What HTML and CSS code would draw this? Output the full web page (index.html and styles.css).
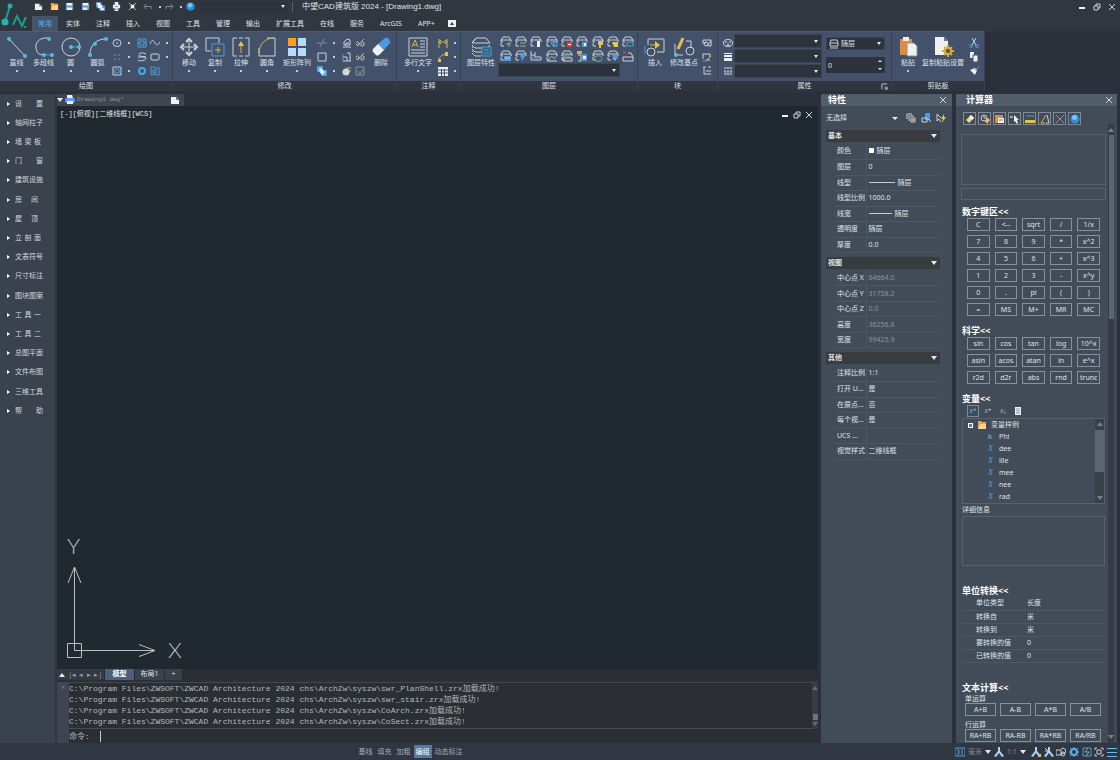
FILE: index.html
```
<!DOCTYPE html>
<html lang="zh-CN">

<head>
    <meta charset="UTF-8">
    <meta name="viewport" content="width=device-width, initial-scale=1.0">
    <title>中望CAD建筑版 2024 - [Drawing1.dwg]</title>
    <link rel="stylesheet" href="styles.css">
</head>

<body>
    <!-- icon sprite -->
    <svg class="sprite" aria-hidden="true">
        <symbol id="new" viewBox="0 0 10 10"><path class="fw" d="M1 2h5l3 3v4H1z"/><path class="fd" d="M6 2v3h3z"/></symbol>
        <symbol id="folder" viewBox="0 0 10 10"><path class="fo" d="M1 1h3l1 1h4v7H1z"/><path d="M3 4h6v5H1z" fill="#ffd08a"/></symbol>
        <symbol id="save" viewBox="0 0 10 10"><path class="fb" d="M1 1h8v8H1z"/><path class="fw" d="M2 1h6v3H2zM2 6h6v3H2z"/></symbol>
        <symbol id="saveas" viewBox="0 0 10 10"><path class="fb" d="M1 1h8v8H1z"/><path class="fw" d="M2 1h6v3H2zM2 6h5v3H2z"/><path class="y" d="M9 4L6 9"/></symbol>
        <symbol id="copies" viewBox="0 0 10 10"><path class="fb" d="M0 0h6v6H0zM4 4h6v6H4z"/><path class="fw" d="M1 1h4v2H1zM2 3h5v4H2zM5 7h4v2H5z"/></symbol>
        <symbol id="print" viewBox="0 0 10 10"><path class="fw" d="M3 0h4v3H3zM1 3h8v4H1zM3 7h4v3H3z"/><path class="b" d="M3 5h4M3 8h4"/></symbol>
        <symbol id="printblue" viewBox="0 0 10 10"><path class="fw" d="M2 0h5l1 3H2z"/><rect x="0" y="3" width="10" height="5" rx="2" fill="#5b9cf0"/><path class="fw" d="M2 6h6v3H2z"/></symbol>
        <symbol id="zoomall" viewBox="0 0 10 10"><path class="w" d="M1 1l2 2M9 1L7 3M1 9l2-2M9 9L7 7"/><path class="fw" d="M3 3h4v4H3z"/></symbol>
        <symbol id="undo" viewBox="0 0 10 10"><path class="g" d="M9 8V5H2M4 2L1 5l3 3"/></symbol>
        <symbol id="redo" viewBox="0 0 10 10"><path class="g" d="M1 8V5h7M6 2l3 3-3 3"/></symbol>
        <symbol id="help" viewBox="0 0 10 10"><circle cx="5" cy="5" r="4.500" fill="#2b8fdc"/><circle cx="4.500" cy="3.500" r="2.500" fill="#79c5f7"/></symbol>

        <symbol id="line" viewBox="0 0 22 22"><path class="w" d="M3 3l16 17"/><circle class="fc" cx="3" cy="3" r="2"/><circle class="fc" cx="19" cy="20" r="2"/></symbol>
        <symbol id="pline" viewBox="0 0 22 22"><path class="w" d="M16 2C7 1 2 6 3 12s4 7 8 7"/><path class="b" d="M11 19h8"/><circle class="fc" cx="16" cy="3" r="2"/><circle class="fc" cx="11" cy="19" r="2"/><circle class="fc" cx="19" cy="19" r="2"/></symbol>
        <symbol id="circle" viewBox="0 0 22 22"><circle class="w" cx="11" cy="11" r="9"/><path class="b" d="M11 11h9"/><circle class="fc" cx="11" cy="11" r="2"/><circle class="fc" cx="19" cy="11" r="2"/></symbol>
        <symbol id="arc" viewBox="0 0 22 22"><path class="w" d="M3 19C3 9 9 3 19 3"/><circle class="fc" cx="3" cy="19" r="2"/><circle class="fc" cx="8" cy="8" r="2"/><circle class="fc" cx="19" cy="3" r="2"/></symbol>
        <symbol id="move" viewBox="0 0 22 22"><path class="w" d="M11 5v12M5 11h12"/><path class="w" d="M8 6l3-3 3 3M8 16l3 3 3-3M6 8l-3 3 3 3M16 8l3 3-3 3" stroke-width="2"/></symbol>
        <symbol id="copy" viewBox="0 0 22 22"><path class="w" d="M7 15H2V2h13v5"/><path class="b" d="M8 8h12v12H8z"/><path class="y" d="M14 11v6M11 14h6"/></symbol>
        <symbol id="stretch" viewBox="0 0 22 22"><path class="w" d="M7 2H3v18h4M15 2h4v18h-4M9 2h4M9 20h4"/><path class="y" d="M11 17V8"/><path class="fy" d="M11 5l3 5H8z"/></symbol>
        <symbol id="fillet" viewBox="0 0 22 22"><path class="w" d="M11 2h8v18H3v-8"/><path class="y" d="M3 18C3 8 9 2 18 2"/></symbol>
        <symbol id="array" viewBox="0 0 22 22"><path fill="#f6a21c" d="M2 2h8v8H2z"/><path fill="#b5dcfb" d="M12 2h8v8h-8zM2 12h8v8H2zM12 12h8v8h-8z"/></symbol>
        <symbol id="erase" viewBox="0 0 22 22"><path class="fb" d="M8 8l7-6q2-1 3 0l2 3q1 1 0 2l-6 7z"/><path class="fw" d="M8 8l6 6-5 5q-2 1-3 0l-3-3q-1-2 0-3z"/></symbol>
        <symbol id="mtext" viewBox="0 0 22 22"><path class="w" d="M2 2h18v18H2zM4 14h14M4 17h14M13 5h5M13 8h5M13 11h5"/><path class="y" d="M5 11l3-7 3 7M6 9h4"/></symbol>
        <symbol id="layers" viewBox="0 0 22 22"><path class="w" d="M6 2h10l4 5H2zM2 9l3 3h12l3-3M2 13l3 3h7M2 17l3 3h6M6 2L2 7M2 12l2-2M2 16l2-2"/><path fill="#35617d" stroke="#4a9fd8" d="M12 11h9v9h-9z"/><path class="b" d="M14 14h5M14 17h5"/></symbol>
        <symbol id="insert" viewBox="0 0 22 22"><path class="w" d="M4 9V3h16v13h-7"/><circle class="w" cx="7" cy="16" r="4"/><path class="b" d="M1 10v8"/><path class="y" d="M6 9h6"/><path class="fy" d="M11 5l5 4-5 4z"/></symbol>
        <symbol id="basept" viewBox="0 0 22 22"><path class="w" d="M2 8v11h8M13 5h5v7"/><path stroke="#e9bd45" stroke-width="3" d="M10 2L5 13"/><circle class="w" cx="17" cy="15" r="4"/><circle class="fc" cx="3" cy="19" r="2"/></symbol>
        <symbol id="paste" viewBox="0 0 22 22"><path fill="#e58a3b" d="M3 3h12v16H3z"/><path class="fw" d="M6 1h6v4H6z"/><path fill="#eef1f4" stroke="#8b949f" d="M10 7h7l3 3v10H10z"/></symbol>
        <symbol id="pasteset" viewBox="0 0 22 22"><path class="fw" d="M3 1h9l4 4v14H3z"/><path class="fd" d="M12 1v4h4z"/><path d="M16 9v12M10 15h12M12 11l8 8M20 11l-8 8" stroke="#dba82f" stroke-width="2"/><circle cx="16" cy="15" r="4" fill="#dba82f"/><circle cx="16" cy="15" r="2" fill="#43526a"/></symbol>

        <symbol id="s-ellipse" viewBox="0 0 10 10"><ellipse class="w" cx="5" cy="5" rx="4" ry="3.500"/><circle class="fc" cx="5" cy="5" r="1"/></symbol>
        <symbol id="s-hatch" viewBox="0 0 10 10"><path class="b" d="M1 1h8v8H1zM3 3h4v4H3z"/><path class="b" d="M1 5h2M7 5h2"/></symbol>
        <symbol id="s-spline" viewBox="0 0 10 10"><path class="w" d="M0 6c2-5 3-4 5-1s3 2 5-1"/></symbol>
        <symbol id="s-point" viewBox="0 0 10 10"><path class="b" d="M2 2l2 2M8 2L6 4M2 8l2-2M8 8L6 6"/></symbol>
        <symbol id="s-helix" viewBox="0 0 10 10"><path class="w" d="M9 2C5 0 1 1 2 3s7 1 7 3-5 4-8 2M1 5h8"/></symbol>
        <symbol id="s-rect" viewBox="0 0 10 10"><rect class="w" x="1" y="2" width="8" height="6" rx="1"/></symbol>
        <symbol id="s-region" viewBox="0 0 10 10"><path class="w" d="M1 1h8v8H1z"/><path class="b" d="M3 3h4v4H3z"/></symbol>
        <symbol id="s-donut" viewBox="0 0 10 10"><circle cx="5" cy="5" r="3" fill="none" stroke="#45a8e8" stroke-width="2"/></symbol>
        <symbol id="s-wipe" viewBox="0 0 10 10"><path class="b" d="M1 1h4l1 2 3-2v8H6L5 8 1 9zM3 4h3v3H3z"/></symbol>
        <symbol id="s-trim" viewBox="0 0 10 10"><path class="g" d="M0 5h4M6 5h4M7 1L3 9"/></symbol>
        <symbol id="s-square" viewBox="0 0 10 10"><path class="w" d="M1 1h8v8H1z"/><path class="b" d="M1 7v2h2"/></symbol>
        <symbol id="s-bool" viewBox="0 0 10 10"><rect x="0" y="0" width="6" height="6" rx="1" fill="#4aa8ec"/><rect x="4" y="4" width="6" height="6" rx="1" fill="#4aa8ec"/><path fill="#d5ecfc" d="M2 3l2-1 4 4-2 3-3-2z"/></symbol>
        <symbol id="s-offset" viewBox="0 0 10 10"><path class="w" d="M1 9h8M2 7V4l3-3 3 1v5z"/><path class="w" d="M4 7V5h3"/></symbol>
        <symbol id="s-align" viewBox="0 0 10 10"><path class="w" d="M1 9h8M5 1h3v8M1 5h4v4"/><path class="b" d="M1 2v7"/></symbol>
        <symbol id="s-ball" viewBox="0 0 10 10"><circle cx="4" cy="6" r="3.500" fill="#d5d9de"/><path class="y" d="M4 2h5M8 4v2"/></symbol>
        <symbol id="s-break" viewBox="0 0 10 10"><path class="y" d="M9 1L2 8"/><path class="w" d="M1 5c1-2 3-1 3 1S2 8 1 6M7 4c2-1 3 3 1 4S5 6 7 5"/></symbol>
        <symbol id="s-edit" viewBox="0 0 10 10"><path class="g" d="M1 1h8v8H1zM3 5l2 3 3-5"/></symbol>
        <symbol id="s-dim" viewBox="0 0 10 10"><path class="y" d="M1 1v9M9 1v9M1 4h8M3 2L1 4l2 2M7 2l2 2-2 2"/></symbol>
        <symbol id="s-leader" viewBox="0 0 10 10"><path class="y" d="M1 9c0-4 2-6 7-7"/><path class="fy" d="M7 0h3v4H7zM0 7h3v3H0z"/></symbol>
        <symbol id="s-table" viewBox="0 0 10 10"><path class="fw" d="M0 1h10v9H0z"/><path stroke="#43526a" d="M0 4h10M0 7h10M3.500 3v7M6.500 3v7"/></symbol>
        <symbol id="s-layer" viewBox="0 0 12 12"><path class="w" d="M3 1h6l2 3H1zM1 4v2h2M1 7v3h3M11 4v2"/></symbol>
        <symbol id="s-block" viewBox="0 0 10 10"><path class="w" d="M1 2h8M1 2v3h3M9 2v6H6"/><circle class="w" cx="4" cy="6" r="2"/><path class="w" d="M5 8l4-5"/></symbol>
        <symbol id="s-blockedit" viewBox="0 0 10 10"><path class="w" d="M1 7V2h7v3M4 8h4"/><path class="y" d="M9 4L5 8"/><path class="b" d="M1 9h3"/></symbol>
        <symbol id="s-list" viewBox="0 0 10 10"><path class="y" d="M1 1h3"/><path class="w" d="M2 1v7h7M4 5h5M6 1h3"/></symbol>
        <symbol id="s-palette" viewBox="0 0 10 10"><ellipse class="w" cx="5" cy="5" rx="4.500" ry="3.500"/><circle class="w" cx="3" cy="4" r=".5"/><circle class="w" cx="7" cy="4" r=".5"/><circle class="w" cx="5" cy="7" r="1"/></symbol>
        <symbol id="s-weight" viewBox="0 0 10 10"><path class="fw" d="M1 1h8v1H1zM1 3h8v2H1zM1 6h8v3H1z"/></symbol>
        <symbol id="s-ltype" viewBox="0 0 10 10"><path class="w" d="M1 2h8M1 8h8"/><path class="w" stroke-dasharray="2 1" d="M1 5h8M1 6h8"/></symbol>
        <symbol id="s-cut" viewBox="0 0 10 10"><path class="w" d="M3 0l4 7M7 0L3 7"/><circle class="b" cx="2" cy="8" r="1.500"/><circle class="b" cx="8" cy="8" r="1.500"/></symbol>
        <symbol id="s-docs" viewBox="0 0 10 10"><path class="fw" d="M1 0h4v6H1z"/><path class="fw" stroke="#43526a" d="M4 3h5v7H4z"/></symbol>
        <symbol id="s-brush" viewBox="0 0 10 10"><path class="fw" d="M1 4l5 5 2-5-2-2z"/><path class="b" d="M6 4l4-3"/></symbol>
        <symbol id="s-color" viewBox="0 0 10 10"><path class="w" d="M1 6V1h5M3 8V3h5"/><path class="w" d="M5 5h4v4H5z"/><path d="M6 6h2v2H6z" fill="#d99a5a"/></symbol>
        <symbol id="s-pick" viewBox="0 0 10 10"><path class="fb" d="M4 0h5v7H4z"/><path class="w" d="M1 5h5v4H1zM7 6l3 3"/></symbol>
        <symbol id="s-quick" viewBox="0 0 10 10"><path class="w" d="M1 1v7l2-2 2 3M1 1l4 4"/><path class="fy" d="M8 1L5 6h2L6 10l4-6H8z"/></symbol>
        <symbol id="s-eraser" viewBox="0 0 10 10"><path fill="#e7d78e" d="M1 6l5-5 3 3-5 5z"/><path class="fw" d="M6 1l3 3-2 2-3-3z"/></symbol>
        <symbol id="s-history" viewBox="0 0 10 10"><circle class="w" cx="4" cy="4" r="3"/><path class="w" d="M4 2v2h2"/><path class="fy" d="M5 7l3-3 2 2-3 4z"/></symbol>
        <symbol id="s-clip" viewBox="0 0 10 10"><path fill="#e58a3b" d="M0 1h8v8H0z"/><path class="fw" d="M3 4h6v5H3z"/><path stroke="#c2593c" d="M4 6h4"/></symbol>
        <symbol id="s-cursor" viewBox="0 0 10 10"><path class="w" d="M1 2v2M0 3h3"/><path class="fw" d="M4 1l5 5H7l1 3-1 1-2-3-1 1z"/></symbol>
        <symbol id="s-dist" viewBox="0 0 10 10"><path class="b" d="M1 2h8"/><path class="fy" d="M0 6h10v3H0z"/></symbol>
        <symbol id="s-angle" viewBox="0 0 10 10"><path class="y" d="M6 1L1 9h4"/><path class="w" d="M7 1l2 8H6"/></symbol>
        <symbol id="s-cross" viewBox="0 0 10 10"><path class="g" d="M1 1l8 8M9 1L1 9"/></symbol>
        <symbol id="x" viewBox="0 0 8 8"><path class="w" d="M1 1l6 6M7 1L1 7"/></symbol>
        <symbol id="restore" viewBox="0 0 8 8"><path class="w" d="M1 3h4v4H1zM3 3V1h4v4H5"/></symbol>
        <symbol id="min" viewBox="0 0 8 8"><path class="fw" d="M1 4h6v2H1z"/></symbol>
        <symbol id="person" viewBox="0 0 10 10"><path fill="#a9d4f3" d="M4 0h2v4l4 5-2 1-3-4-3 4-2-1 4-5z"/></symbol>
        <symbol id="gear" viewBox="0 0 10 10"><circle cx="5" cy="5" r="3" fill="none" stroke="#55b2f0" stroke-width="2"/><path class="c" d="M5 0v2M5 8v2M0 5h2M8 5h2M1 1l2 2M7 7l2 2M9 1L7 3M3 7L1 9"/></symbol>
    </svg>

    <div class="app">
        <header class="top">
            <svg class="logo" viewBox="0 0 32 30"><path d="M10 6L5 22M13 25l4-9 5 10 4-9" fill="none" stroke="#1a9c96" stroke-width="2"/><circle cx="10" cy="6" r="2.500" fill="#1fb5ac"/><circle cx="5" cy="22" r="3.500" fill="#1fb5ac"/><circle cx="25" cy="27" r="1" fill="#1fb5ac"/></svg>
            <div class="top-rows">
                <div class="titlebar">
                    <div class="quick">
                        <button aria-label="新建"><svg><use href="#new"/></svg></button>
                        <button aria-label="打开"><svg><use href="#folder"/></svg></button>
                        <button aria-label="保存"><svg><use href="#save"/></svg></button>
                        <button aria-label="另存为"><svg><use href="#saveas"/></svg></button>
                        <button aria-label="全部保存"><svg><use href="#copies"/></svg></button>
                        <button aria-label="打印"><svg><use href="#print"/></svg></button>
                        <button aria-label="预览"><svg><use href="#zoomall"/></svg></button>
                        <button aria-label="放弃"><svg><use href="#undo"/></svg></button>
                        <i class="dot"></i>
                        <button aria-label="重做"><svg><use href="#redo"/></svg></button>
                        <i class="dot"></i>
                        <button aria-label="帮助"><svg><use href="#help"/></svg></button>
                    </div>
                    <span class="pick pick-space"><select aria-label="工作空间"><option></option></select></span>
                    <h1>中望CAD建筑版 2024 - [Drawing1.dwg]</h1>
                    <div class="winbtns">
                        <button aria-label="最小化"><svg><use href="#min"/></svg></button>
                        <button aria-label="还原"><svg><use href="#restore"/></svg></button>
                        <button aria-label="关闭"><svg><use href="#x"/></svg></button>
                    </div>
                </div>
                <nav class="tabs">
                    <a href="#" class="active">常用</a>
                    <a href="#">实体</a>
                    <a href="#">注释</a>
                    <a href="#">插入</a>
                    <a href="#">视图</a>
                    <a href="#">工具</a>
                    <a href="#">管理</a>
                    <a href="#">输出</a>
                    <a href="#">扩展工具</a>
                    <a href="#">在线</a>
                    <a href="#">服务</a>
                    <a href="#">ArcGIS</a>
                    <a href="#">APP+</a>
                    <button class="fold" aria-label="折叠"><svg viewBox="0 0 8 7"><path class="fw" d="M0 0h8v7H0z"/><path d="M4 2l2 3H2z" fill="#31373f"/></svg></button>
                </nav>
            </div>
        </header>

        <div class="ribbon">
            <section class="panel">
                <div class="tools draw">
                    <button class="tool more"><svg><use href="#line"/></svg>直线</button>
                    <button class="tool more"><svg><use href="#pline"/></svg>多段线</button>
                    <button class="tool more"><svg><use href="#circle"/></svg>圆</button>
                    <button class="tool more"><svg><use href="#arc"/></svg>圆弧</button>
                    <div class="minis">
                        <svg><use href="#s-ellipse"/></svg><i class="dot"></i><svg><use href="#s-hatch"/></svg><svg><use href="#s-spline"/></svg><i class="dot"></i>
                        <svg><use href="#s-point"/></svg><i class="dot"></i><svg><use href="#s-helix"/></svg><svg><use href="#s-rect"/></svg><i class="dot"></i>
                        <svg><use href="#s-region"/></svg><i class="dot"></i><svg><use href="#s-donut"/></svg><svg><use href="#s-wipe"/></svg>
                    </div>
                </div>
                <h2>绘图</h2>
            </section>

            <section class="panel">
                <div class="tools modify">
                    <button class="tool more"><svg><use href="#move"/></svg>移动</button>
                    <button class="tool more"><svg><use href="#copy"/></svg>复制</button>
                    <button class="tool more"><svg><use href="#stretch"/></svg>拉伸</button>
                    <button class="tool more"><svg><use href="#fillet"/></svg>圆角</button>
                    <button class="tool wide more"><svg><use href="#array"/></svg>矩形阵列</button>
                    <div class="minis">
                        <svg><use href="#s-trim"/></svg><i class="dot"></i><svg><use href="#s-offset"/></svg><svg><use href="#s-break"/></svg>
                        <svg><use href="#s-square"/></svg><i class="dot"></i><svg><use href="#s-align"/></svg><svg><use href="#s-break"/></svg>
                        <svg><use href="#s-bool"/></svg><i class="dot"></i><svg><use href="#s-ball"/></svg><svg><use href="#s-edit"/></svg>
                    </div>
                    <button class="tool"><svg><use href="#erase"/></svg>删除</button>
                </div>
                <h2>修改</h2>
            </section>

            <section class="panel">
                <div class="tools annotate">
                    <button class="tool wide more"><svg><use href="#mtext"/></svg>多行文字</button>
                    <div class="minis">
                        <svg><use href="#s-dim"/></svg><i class="dot"></i>
                        <svg><use href="#s-leader"/></svg><i class="dot"></i>
                        <svg><use href="#s-table"/></svg><i class="dot"></i>
                    </div>
                </div>
                <h2>注释</h2>
            </section>

            <section class="panel">
                <div class="tools layer">
                    <button class="tool wide"><svg><use href="#layers"/></svg>图层特性</button>
                    <div class="layer-side">
                        <div class="layer-icons">
                            <svg viewBox="0 0 12 12"><use href="#s-layer"/><path class="gn" d="M6 8h5M9 6v5"/></svg>
                            <svg viewBox="0 0 12 12"><use href="#s-layer"/><path class="gn" d="M5 7h6M5 10h6"/></svg>
                            <svg viewBox="0 0 12 12"><use href="#s-layer"/><path class="fw" d="M7 5h3v6H7z"/></svg>
                            <svg viewBox="0 0 12 12"><use href="#s-layer"/><path class="c" d="M5 6h6v4H7zM8 5v6"/></svg>
                            <svg viewBox="0 0 12 12"><use href="#s-layer"/><path fill="#e0403c" d="M6 6h5v5H6z"/><path class="fw" d="M7 8h3v1H7z"/></svg>
                            <svg viewBox="0 0 12 12"><use href="#s-layer"/><path class="fb" d="M6 6h5v5H6z"/><path class="fw" d="M8 7h2v3H8z"/></svg>
                            <svg viewBox="0 0 12 12"><use href="#s-layer"/><path class="fy" d="M6 5h5v4H9v3H7V9H6z"/></svg>
                            <svg viewBox="0 0 12 12"><use href="#s-layer"/><path class="fy" d="M5 6h6v5H7z"/><path class="w" d="M6 7l4 4"/></svg>
                            <svg viewBox="0 0 12 12"><use href="#s-layer"/><path class="b" d="M5 6h6v4H5z"/></svg>
                            <svg viewBox="0 0 12 12"><use href="#s-layer"/><path class="fb" d="M4 6h7v5H4z"/><path class="w" d="M5 8h5"/></svg>
                            <svg viewBox="0 0 12 12"><use href="#s-layer"/><path class="fb" d="M5 5h6L7 11z"/></svg>
                            <svg viewBox="0 0 12 12"><path class="w" d="M1 1v9h10V7H5V2M1 5h4"/><path class="b" d="M2 8h7"/></svg>
                            <svg viewBox="0 0 12 12"><use href="#s-layer"/><path class="gn" d="M3 9l3-3 2 3 3-4"/><path class="w" d="M1 11h10"/></svg>
                            <svg viewBox="0 0 12 12"><use href="#s-layer"/><path class="gn" d="M3 6h7"/><path class="w" d="M2 8h9v3H2z"/></svg>
                            <svg viewBox="0 0 12 12"><path class="fo" d="M1 1h5v3H1z"/><path class="w" d="M2 5h3v6H2"/><path class="fb" d="M6 4h5v7H6z"/><path class="fw" d="M7 6h3v3H7z"/></svg>
                            <svg viewBox="0 0 12 12"><use href="#s-layer"/><path class="gn" d="M3 8c1-3 6-3 7 0M10 9c-1 3-6 3-7 0"/></svg>
                            <svg viewBox="0 0 12 12"><use href="#s-layer"/><path class="fb" d="M5 5h6v3l-4 3z"/><path class="w" d="M6 8l3 2"/></svg>
                            <svg viewBox="0 0 12 12"><path stroke="#e0403c" d="M1 1l3 3M4 1L1 4"/><path class="w" d="M6 3h3l2 4H1v4h10V7"/></svg>
                        </div>
                        <span class="pick pick-layer"><select aria-label="当前图层"><option></option></select></span>
                    </div>
                </div>
                <h2>图层</h2>
            </section>

            <section class="panel">
                <div class="tools block">
                    <button class="tool"><svg><use href="#insert"/></svg>插入</button>
                    <button class="tool mid"><svg><use href="#basept"/></svg>修改基点</button>
                    <div class="minis">
                        <svg><use href="#s-block"/></svg>
                        <svg><use href="#s-blockedit"/></svg>
                        <svg><use href="#s-list"/></svg>
                    </div>
                </div>
                <h2>块</h2>
            </section>

            <section class="panel">
                <div class="tools props">
                    <div class="minis">
                        <svg><use href="#s-palette"/></svg>
                        <svg><use href="#s-weight"/></svg>
                        <svg><use href="#s-ltype"/></svg>
                    </div>
                    <div class="prop-picks">
                        <span class="pick"><select aria-label="颜色"><option></option></select></span>
                        <span class="pick"><select aria-label="线宽"><option></option></select></span>
                        <span class="pick"><select aria-label="线型"><option></option></select></span>
                    </div>
                    <div class="prop-side">
                        <span class="pick pick-style"><svg viewBox="0 0 10 10"><path class="w" d="M2 1h6l1 3H1zM1 4v3h8V4M1 9h8"/></svg><select aria-label="打印样式"><option>随层</option></select></span>
                        <span class="spin"><input type="text" value="0" aria-label="透明度"><i class="up"></i><i class="down"></i></span>
                    </div>
                </div>
                <h2 class="has-launch">属性<svg class="launch" viewBox="0 0 8 8"><path class="w" d="M1 7V1h6M4 4l3 3M7 4v3H4"/></svg></h2>
            </section>

            <section class="panel">
                <div class="tools clip">
                    <button class="tool more"><svg><use href="#paste"/></svg>粘贴</button>
                    <button class="tool xwide"><svg><use href="#pasteset"/></svg>复制粘贴设置</button>
                    <div class="minis">
                        <svg><use href="#s-cut"/></svg>
                        <svg><use href="#s-docs"/></svg>
                        <svg><use href="#s-brush"/></svg>
                    </div>
                </div>
                <h2>剪贴板</h2>
            </section>
        </div>

        <main class="work">
            <ul class="side">
                <li><a href="#"><span>设</span><span>置</span></a></li>
                <li><a href="#"><span>轴网柱子</span></a></li>
                <li><a href="#" class="three"><span>墙</span><span>梁</span><span>板</span></a></li>
                <li><a href="#"><span>门</span><span>窗</span></a></li>
                <li><a href="#"><span>建筑设施</span></a></li>
                <li><a href="#" class="near"><span>房</span><span>间</span></a></li>
                <li><a href="#" class="near"><span>屋</span><span>顶</span></a></li>
                <li><a href="#" class="three"><span>立</span><span>剖</span><span>面</span></a></li>
                <li><a href="#"><span>文表符号</span></a></li>
                <li><a href="#"><span>尺寸标注</span></a></li>
                <li><a href="#"><span>图块图案</span></a></li>
                <li><a href="#" class="three"><span>工</span><span>具</span><span>一</span></a></li>
                <li><a href="#" class="three"><span>工</span><span>具</span><span>二</span></a></li>
                <li><a href="#"><span>总图平面</span></a></li>
                <li><a href="#"><span>文件布图</span></a></li>
                <li><a href="#"><span>三维工具</span></a></li>
                <li><a href="#"><span>帮</span><span>助</span></a></li>
            </ul>

            <div class="doc">
                <div class="doctabs">
                    <i class="caret"></i>
                    <a href="#"><svg><use href="#printblue"/></svg>Drawing1 dwg*</a>
                    <button aria-label="新建图纸"><svg><use href="#new"/></svg></button>
                </div>
                <div class="canvas">
                    <div class="canvas-top">
                        <span>[-][俯视][二维线框][WCS]</span>
                        <div class="mdi">
                            <button aria-label="最小化图纸"><svg><use href="#min"/></svg></button>
                            <button aria-label="还原图纸"><svg><use href="#restore"/></svg></button>
                            <button aria-label="关闭图纸"><svg><use href="#x"/></svg></button>
                        </div>
                    </div>
                    <svg class="ucs" viewBox="0 0 128 128">
                        <path d="M10.500 112.500h14v14h-14zM17.500 119.500V36.500M11 52l6.500-16L24 52M17.500 119.500H98M82 113.500l16 6-16 6"/>
                        <text x="10" y="23">Y</text>
                        <text x="111" y="127">X</text>
                    </svg>
                </div>
                <div class="layouts">
                    <div class="steps"><i class="caret flip"></i><span>|◂</span><span>◂</span><span>▸</span><span>▸|</span></div>
                    <a href="#" class="on">模型</a>
                    <a href="#">布局1</a>
                    <a href="#" class="plus">+</a>
                </div>
                <div class="cmd">
                    <div class="grip">×</div>
                    <div class="log">
                        <p>C:\Program Files\ZWSOFT\ZWCAD Architecture 2024 chs\ArchZw\syszw\swr_PlanShell.zrx加载成功!</p>
                        <p>C:\Program Files\ZWSOFT\ZWCAD Architecture 2024 chs\ArchZw\syszw\swr_stair.zrx加载成功!</p>
                        <p>C:\Program Files\ZWSOFT\ZWCAD Architecture 2024 chs\ArchZw\syszw\CoArch.zrx加载成功!</p>
                        <p>C:\Program Files\ZWSOFT\ZWCAD Architecture 2024 chs\ArchZw\syszw\CoSect.zrx加载成功!</p>
                        <div class="prompt"><label for="cmdline">命令:</label><i></i><input id="cmdline" type="text"></div>
                    </div>
                    <div class="cmdbar"><i class="caret flip"></i><b></b><i class="caret"></i></div>
                </div>
            </div>

            <aside class="dock props-dock">
                <h3>特性<button aria-label="关闭特性"><svg><use href="#x"/></svg></button></h3>
                <div class="props-body">
                    <div class="choose">
                        <span class="pick"><select aria-label="选择对象"><option>无选择</option></select></span>
                        <svg><use href="#s-color"/></svg>
                        <svg><use href="#s-pick"/></svg>
                        <svg><use href="#s-quick"/></svg>
                    </div>
                    <h4>基本<i class="caret"></i></h4>
                    <table>
                        <tr><th>颜色</th><td><i class="swatch"></i>随层</td></tr>
                        <tr><th>图层</th><td>0</td></tr>
                        <tr><th>线型</th><td><i class="rule"></i>随层</td></tr>
                        <tr><th>线型比例</th><td>1000.0</td></tr>
                        <tr><th>线宽</th><td><i class="rule short"></i>随层</td></tr>
                        <tr><th>透明度</th><td>随层</td></tr>
                        <tr><th>厚度</th><td>0.0</td></tr>
                    </table>
                    <h4>视图<i class="caret"></i></h4>
                    <table class="readonly">
                        <tr><th>中心点 X</th><td>64664.0</td></tr>
                        <tr><th>中心点 Y</th><td>31758.2</td></tr>
                        <tr><th>中心点 Z</th><td>0.0</td></tr>
                        <tr><th>高度</th><td>36256.8</td></tr>
                        <tr><th>宽度</th><td>99425.9</td></tr>
                    </table>
                    <h4>其他<i class="caret"></i></h4>
                    <table>
                        <tr><th>注释比例</th><td>1:1</td></tr>
                        <tr><th>打开 U...</th><td>是</td></tr>
                        <tr><th>在原点...</th><td>否</td></tr>
                        <tr><th>每个视...</th><td>是</td></tr>
                        <tr><th>UCS ...</th><td></td></tr>
                        <tr><th>视觉样式</th><td>二维线框</td></tr>
                    </table>
                </div>
            </aside>

            <aside class="dock calc-dock">
                <h3>计算器<button aria-label="关闭计算器"><svg><use href="#x"/></svg></button></h3>
                <div class="calc-wrap">
                    <div class="calc">
                        <div class="calc-tools">
                            <button aria-label="清除"><svg><use href="#s-eraser"/></svg></button>
                            <button aria-label="清除历史"><svg><use href="#s-history"/></svg></button>
                            <button aria-label="粘贴到命令行"><svg><use href="#s-clip"/></svg></button>
                            <button aria-label="获取坐标"><svg><use href="#s-cursor"/></svg></button>
                            <button aria-label="两点距离"><svg><use href="#s-dist"/></svg></button>
                            <button aria-label="两点角度"><svg><use href="#s-angle"/></svg></button>
                            <button aria-label="两线交点"><svg><use href="#s-cross"/></svg></button>
                            <button aria-label="计算器帮助"><svg><use href="#help"/></svg></button>
                        </div>
                        <textarea class="history" aria-label="历史记录" readonly></textarea>
                        <input class="entry" type="text" aria-label="输入">

                        <h4>数字键区&lt;&lt;</h4>
                        <div class="keys">
                            <button>C</button><button>&lt;--</button><button>sqrt</button><button>/</button><button>1/x</button>
                            <button>7</button><button>8</button><button>9</button><button>*</button><button>x^2</button>
                            <button>4</button><button>5</button><button>6</button><button>+</button><button>x^3</button>
                            <button>1</button><button>2</button><button>3</button><button>-</button><button>x^y</button>
                            <button>0</button><button>.</button><button>pi</button><button>(</button><button>)</button>
                            <button>=</button><button>MS</button><button>M+</button><button>MR</button><button>MC</button>
                        </div>

                        <h4>科学&lt;&lt;</h4>
                        <div class="keys">
                            <button>sin</button><button>cos</button><button>tan</button><button>log</button><button>10^x</button>
                            <button>asin</button><button>acos</button><button>atan</button><button>ln</button><button>e^x</button>
                            <button>r2d</button><button>d2r</button><button>abs</button><button>rnd</button><button>trunc</button>
                        </div>

                        <h4>变量&lt;&lt;</h4>
                        <div class="var-tools">
                            <button class="on"><em>x</em>*</button>
                            <button><em>x</em>*</button>
                            <button><em>x</em>ₓ</button>
                            <button aria-label="返回变量"><svg viewBox="0 0 10 10"><path class="fw" d="M2 1h6v8H2z"/><path class="g" d="M3 3h4M3 5h4M3 7h4"/></svg></button>
                        </div>
                        <div class="vars">
                            <ul>
                                <li class="root"><i class="minus"></i><svg><use href="#folder"/></svg>变量样例</li>
                                <li><b>k</b>Phi</li>
                                <li><em>X</em>dee</li>
                                <li><em>X</em>ille</li>
                                <li><em>X</em>mee</li>
                                <li><em>X</em>nee</li>
                                <li><em>X</em>rad</li>
                            </ul>
                            <div class="vbar"><i class="caret flip"></i><b></b><i class="caret"></i></div>
                        </div>
                        <label class="detail-label" for="detail">详细信息</label>
                        <textarea class="detail" id="detail" readonly></textarea>

                        <h4>单位转换&lt;&lt;</h4>
                        <table>
                            <tr><th>单位类型</th><td>长度</td></tr>
                            <tr><th>转换自</th><td>米</td></tr>
                            <tr><th>转换到</th><td>米</td></tr>
                            <tr><th>要转换的值</th><td>0</td></tr>
                            <tr><th>已转换的值</th><td>0</td></tr>
                        </table>

                        <h4>文本计算&lt;&lt;</h4>
                        <h5>单运算</h5>
                        <div class="ops"><button>A+B</button><button>A-B</button><button>A*B</button><button>A/B</button></div>
                        <h5>行运算</h5>
                        <div class="ops"><button>RA+RB</button><button>RA-RB</button><button>RA*RB</button><button>RA/RB</button></div>
                    </div>
                    <div class="calc-bar"><i class="caret flip"></i><b></b><i class="caret"></i></div>
                </div>
            </aside>
        </main>

        <footer class="status">
            <div class="toggles">
                <button>基线</button>
                <button>填充</button>
                <button>加粗</button>
                <button class="on">编组</button>
                <button>动态标注</button>
            </div>
            <div class="status-right">
                <svg viewBox="0 0 10 10"><path class="b" d="M0 1h10v8H0zM2 3h2v4H2M6 3h2M6 5h2M6 7h2"/></svg>
                <span class="dim">毫米</span><i class="caret"></i>
                <svg><use href="#person"/></svg>
                <span class="dim">1:1</span><i class="caret"></i>
                <div class="status-icons">
                    <svg viewBox="0 0 10 10"><use href="#person"/><path class="fy" d="M7 7h3v3H7z"/></svg>
                    <svg viewBox="0 0 10 10"><use href="#person"/><path class="w" d="M1 1l3 3M1 4h3"/></svg>
                    <svg viewBox="0 0 10 10"><path class="w" d="M0 3h5v5H0zM5 2l2-1 3 2-1 3-3 1"/><circle class="w" cx="7" cy="7" r="2"/></svg>
                    <svg><use href="#gear"/></svg>
                    <svg viewBox="0 0 10 10"><path class="b" d="M1 1h8v8H1z"/><path class="gn" d="M6 1L3 5h4L4 9"/></svg>
                    <svg viewBox="0 0 10 10"><path class="w" d="M1 3V1h2M7 1h2v2M9 7v2H7M3 9H1V7M3 3h4v4H3z"/></svg>
                    <svg viewBox="0 0 10 10"><path fill="#6dbdf2" d="M0 1h10v1H0zM0 5h10v1H0zM0 9h10v1H0z"/></svg>
                </div>
            </div>
        </footer>
    </div>
</body>

</html>
```
FILE: styles.css
```
* {
    margin: 0;
    padding: 0;
    box-sizing: border-box;
}
body {
    background-color: #2b303a;
    color: #dfe3e8;
    font-family: "Noto Sans", "Noto Sans CJK SC", sans-serif;
    font-size: 7px;
    line-height: 10px;
    overflow: hidden;
}
button, select, input, textarea {
    font: inherit;
    color: inherit;
    background: none;
    border: none;
    outline: none;
    border-radius: 0;
}
textarea {
    display: block;
    resize: none;
}
a {
    color: inherit;
    text-decoration: none;
}
ul {
    list-style: none;
}
svg {
    display: block;
    flex: none;
    width: 10px;
    height: 10px;
}
.sprite {
    position: absolute;
    width: 0;
    height: 0;
}

/* icon colours */
.w, .b, .y, .g, .c, .gn { fill: none; }
.w { stroke: #cbd2da; }
.b { stroke: #4a9fd8; }
.c { stroke: #55b2f0; }
.y { stroke: #d9b64a; }
.g { stroke: #8b949f; }
.gn { stroke: #7cc08e; }
.fw { fill: #eef1f4; }
.fb { fill: #4c9be0; }
.fc { fill: #4cc0e0; }
.fy { fill: #e9c04c; }
.fo { fill: #e9a44e; }
.fd { fill: #6a727d; }

.dot {
    width: 2px;
    height: 2px;
    background-color: #c5ccd5;
    align-self: center;
    justify-self: center;
}
.caret {
    flex: none;
    width: 0;
    height: 0;
    border: 3px solid transparent;
    border-top: 4px solid #e8ebee;
    border-bottom: 0;
}
.flip {
    transform: rotate(180deg);
}
.pick {
    position: relative;
    display: flex;
    align-items: center;
    background-color: #2d333c;
    border: 1px solid #3a4350;
}
.pick select {
    appearance: none;
    flex: 1;
    min-width: 0;
    height: 100%;
}
.pick::after {
    content: "";
    position: absolute;
    right: 3px;
    border: 2px solid transparent;
    border-top: 3px solid #e8ebee;
    border-bottom: 0;
}

.app {
    display: flex;
    flex-direction: column;
    height: 100vh;
}

/* title and tabs */
.top {
    display: flex;
    height: 31px;
    background-color: #31373f;
}
.logo {
    width: 32px;
    height: 30px;
}
.top-rows {
    flex: 1;
    display: flex;
    flex-direction: column;
    justify-content: space-between;
}
.titlebar {
    display: flex;
    align-items: center;
    height: 13px;
}
.quick {
    display: flex;
    align-items: center;
    width: 168px;
}
.quick button {
    width: 15px;
    padding-left: 2px;
    margin-right: 1px;
}
.quick .dot {
    margin: 0 2px;
}
.quick svg {
    width: 9px;
    height: 9px;
}
.pick-space {
    width: 88px;
    height: 12px;
    border: none;
}
.titlebar h1 {
    flex: 1;
    margin-left: 4px;
    padding-left: 9px;
    border-left: 1px solid #59616c;
    font-family: "Liberation Sans", "Noto Sans CJK SC", sans-serif;
    font-size: 8px;
    font-weight: normal;
}
.winbtns {
    display: flex;
    gap: 7px;
    padding-right: 4px;
}
.winbtns svg {
    width: 8px;
    height: 8px;
}
.tabs {
    display: flex;
    align-items: flex-end;
}
.tabs a {
    padding: 1px 8px 0;
    line-height: 14px;
}
.tabs .active {
    padding: 1px 6px 0;
    color: #50b4ec;
    background-color: #44546b;
}
.fold {
    margin: 0 0 4px 5px;
}
.fold svg {
    width: 8px;
    height: 7px;
}

/* ribbon */
.ribbon {
    display: flex;
    height: 60px;
}
.panel {
    display: flex;
    flex-direction: column;
    border-right: 1px solid #394250;
    border-top: 1px solid #4d5d75;
    background-color: #43526a;
}
.panel h2 {
    height: 10px;
    background-color: #30363f;
    font-size: 7px;
    font-weight: normal;
    text-align: center;
}
.has-launch {
    display: flex;
    justify-content: center;
}
.launch {
    position: absolute;
    width: 7px;
    height: 7px;
    margin: 2px 0 0 160px;
}
.tools {
    flex: 1;
    display: flex;
    align-items: flex-start;
}
.tool {
    display: flex;
    flex-direction: column;
    align-items: center;
    width: 26px;
    padding-top: 4px;
    line-height: 9px;
    white-space: nowrap;
}
.tool svg {
    width: 22px;
    height: 22px;
}
.tool.mid { width: 32px; }
.tool.wide { width: 34px; }
.tool.xwide { width: 44px; }
.more::after {
    content: "";
    width: 2px;
    height: 2px;
    margin-top: 3px;
    background-color: #c5ccd5;
}
.minis {
    display: grid;
    grid-template-columns: 12px;
    grid-auto-rows: 14px;
    align-items: center;
    justify-items: center;
    padding-top: 4px;
}
.draw { padding-left: 3px; }
.draw .tool { width: 27px; }
.draw .minis { grid-template-columns: 12px 11px 15px 12px 11px; }
.modify { padding: 0 2px 0 3px; }
.modify .minis {
    grid-template-columns: 12px 11px 15px 12px;
    margin: 0 2px;
}
.annotate { padding-left: 4px; }
.annotate .minis {
    grid-template-columns: 12px 11px;
    margin-left: 2px;
}
.layer { padding: 0 1px 0 3px; }
.layer-icons {
    display: grid;
    grid-template-columns: repeat(9, 1fr);
    grid-auto-rows: 14px;
    align-items: center;
    justify-items: center;
    width: 138px;
    padding-top: 3px;
}
.layer-icons svg {
    width: 12px;
    height: 12px;
}
.pick-layer {
    width: 122px;
    height: 14px;
}
.block { padding: 0 4px; }
.block .minis { margin-left: 1px; }
.props { padding: 0 6px 0 4px; }
.prop-picks {
    display: grid;
    gap: 1px;
    width: 88px;
    padding-top: 2px;
}
.prop-picks .pick {
    height: 14px;
}
.prop-side {
    display: grid;
    gap: 7px;
    width: 59px;
    margin-left: 4px;
    padding-top: 5px;
}
.pick-style {
    height: 13px;
    padding-left: 2px;
}
.pick-style select {
    padding-left: 2px;
}
.spin {
    position: relative;
    height: 16px;
    background-color: #2d333c;
}
.spin input {
    width: 48px;
    height: 16px;
    padding-left: 2px;
}
.spin i {
    position: absolute;
    right: 3px;
    border: 2px solid transparent;
}
.spin .up { top: 1px; border-bottom-color: #e8ebee; }
.spin .down { bottom: 1px; border-top-color: #e8ebee; }
.clip { padding: 0 4px 0 3px; }
.clip .minis { margin-left: 3px; }

/* work area */
.work {
    flex: 1;
    display: flex;
    min-height: 0;
    padding: 3px 3px 0 0;
}
.side {
    width: 57px;
    border-right: 2px solid #303740;
    background-color: #39424d;
}
.side a {
    display: flex;
    align-items: center;
    height: 19px;
    padding: 0 12px 0 7px;
    color: #d3d7dc;
}
.side li:nth-child(5n) a {
    height: 20px;
}
.side a.three {
    padding-right: 14px;
}
.side a.near {
    padding-right: 17px;
}
.side a::before {
    content: "";
    margin-right: 5px;
    border: 2px solid transparent;
    border-left: 3px solid #fff;
    border-right: 0;
}
.side span + span {
    margin-left: auto;
}
.doc {
    flex: 1;
    display: flex;
    flex-direction: column;
    min-width: 0;
    margin-right: 3px;
}
.doctabs {
    display: flex;
    align-items: center;
    width: 127px;
    height: 12px;
    background-color: #3f464f;
}
.doctabs a {
    flex: 1;
    display: flex;
    align-items: center;
    gap: 2px;
    padding-left: 2px;
    color: #8a929c;
    font-family: "Liberation Mono", monospace;
    font-size: 6px;
}
.doctabs button {
    padding-right: 4px;
}
.canvas {
    flex: 1;
    display: flex;
    flex-direction: column;
    justify-content: space-between;
    background-color: #212930;
}
.canvas-top {
    display: flex;
    justify-content: space-between;
    padding: 3px 5px 0 3px;
    font-family: "Liberation Mono", "Noto Sans CJK SC", monospace;
    color: #e4e7ea;
}
.mdi {
    display: flex;
    gap: 4px;
    padding-top: 2px;
}
.mdi svg {
    width: 8px;
    height: 8px;
}
.ucs {
    width: 128px;
    height: 128px;
    margin-bottom: 10px;
    overflow: visible;
}
.ucs path {
    fill: none;
    stroke: #b9c0c6;
}
.ucs text {
    fill: #b9c0c6;
    font-family: Lato, "Liberation Sans", sans-serif;
    font-size: 22px;
    font-weight: 300;
}
.layouts {
    display: flex;
    gap: 1px;
    height: 11px;
    background-color: #2a2d32;
}
.layouts a {
    width: 29px;
    background-color: #3a414b;
    text-align: center;
}
.layouts .on {
    background-color: #4d5f7a;
    color: #fff;
    font-weight: bold;
}
.layouts .plus {
    width: 17px;
}
.steps {
    display: flex;
    justify-content: space-around;
    align-items: center;
    width: 47px;
    color: #98a0a9;
    background-color: #343a43;
}
.cmd {
    display: flex;
    height: 61px;
    margin-top: 2px;
    border-top: 1px solid #43484f;
    background-color: #2b2e33;
}
.grip {
    width: 12px;
    background-color: #3e4452;
    color: #7c8492;
    text-align: center;
}
.log {
    flex: 1;
    font-family: "Liberation Mono", "Noto Sans CJK SC", monospace;
    font-size: 8px;
    line-height: 11px;
    color: #b4b8bd;
}
.prompt {
    display: flex;
    align-items: center;
    height: 15px;
    margin-top: 1px;
    border-top: 1px solid #494d52;
}
.prompt i {
    width: 1px;
    height: 11px;
    margin-left: 10px;
    background-color: #c9cdd1;
}
.prompt input {
    flex: 1;
}
.cmdbar {
    display: flex;
    flex-direction: column;
    align-items: center;
    width: 6px;
    height: 46px;
    padding: 3px 0;
    background-color: #383c42;
}
.cmdbar b {
    width: 5px;
    height: 6px;
    margin: auto 0 2px;
    background-color: #70757c;
}
.cmdbar .caret {
    border-top-color: #656b73;
}

/* docked palettes */
.dock {
    display: flex;
    flex-direction: column;
    background-color: #424c58;
}
.dock h3 {
    display: flex;
    justify-content: space-between;
    align-items: center;
    height: 12px;
    background-color: #525d6b;
    color: #fff;
    font-size: 9px;
    line-height: 12px;
}
.dock h3 svg {
    width: 8px;
    height: 8px;
}
.dock th {
    font-weight: normal;
    text-align: left;
    white-space: nowrap;
}
.props-dock {
    width: 131px;
    margin-right: 4px;
}
.props-dock h3 {
    padding: 0 5px 0 7px;
}
.props-body {
    padding: 4px 6px 0 5px;
}
.choose {
    display: flex;
    align-items: center;
    gap: 5px;
    height: 16px;
}
.choose .pick {
    width: 79px;
    background: none;
    border: none;
}
.choose .pick::after {
    border-width: 3px;
    border-bottom: 0;
}
.props-body h4 {
    display: flex;
    justify-content: space-between;
    align-items: center;
    width: 114px;
    height: 12px;
    margin: 4px 0 2px;
    padding: 0 3px 0 2px;
    background-color: #383c41;
}
.props-body table {
    width: 105px;
    margin-left: 9px;
    border-collapse: collapse;
    table-layout: fixed;
}
.props-body tr {
    height: 15px;
}
.props-body tr:nth-child(even) {
    height: 16px;
}
.props-body th, .props-body td {
    padding-left: 2px;
    border-bottom: 1px solid #4c5764;
}
.props-body th {
    width: 31px;
    border-right: 1px solid #4c5764;
}
.readonly td {
    color: #8b949e;
}
.swatch {
    display: inline-block;
    width: 5px;
    height: 5px;
    margin-right: 3px;
    background-color: #fff;
}
.rule {
    display: inline-block;
    width: 26px;
    height: 1px;
    margin-right: 3px;
    background-color: #c8cdd3;
    vertical-align: middle;
}
.rule.short {
    width: 23px;
}

.calc-dock {
    width: 161px;
}
.calc-dock h3 {
    padding: 0 4px 0 10px;
}
.calc-wrap {
    flex: 1;
    display: flex;
    min-height: 0;
    overflow: hidden;
}
.calc {
    flex: 1;
    padding: 6px 2px 0 5px;
    min-width: 0;
}
.calc-tools {
    display: flex;
    gap: 2px;
    padding-left: 2px;
}
.calc-tools button {
    display: grid;
    place-items: center;
    width: 13px;
    height: 13px;
    border: 1px solid #808994;
}
.history {
    width: 145px;
    height: 51px;
    margin-top: 9px;
    border: 1px solid #58626e;
}
.entry {
    display: block;
    width: 145px;
    height: 12px;
    margin-top: 3px;
    border: 1px solid #58626e;
}
.calc h4 {
    margin: 6px 0 0 1px;
    color: #fff;
    font-size: 9px;
    line-height: 12px;
}
.keys {
    display: grid;
    grid-template-columns: repeat(5, 1fr);
    gap: 4px 5px;
    width: 133px;
    margin: 0 0 9px 6px;
}
.keys button, .ops button {
    height: 13px;
    border: 1px solid #87909b;
    line-height: 11px;
    white-space: nowrap;
}
.var-tools {
    display: flex;
    gap: 3px;
    padding-left: 6px;
    height: 13px;
}
.var-tools button {
    display: grid;
    grid-auto-flow: column;
    place-content: center;
    width: 12px;
    height: 12px;
    color: #a3acb6;
}
.var-tools .on {
    border: 1px solid #808994;
    color: #62b2e8;
}
.vars {
    display: flex;
    height: 86px;
    width: 143px;
    margin-left: 1px;
    border: 1px solid #58626e;
}
.vars ul {
    flex: 1;
}
.vars li {
    display: flex;
    align-items: center;
    gap: 5px;
    height: 12px;
    padding-left: 25px;
}
.vars li.root {
    padding-left: 5px;
    gap: 4px;
}
.vars li b {
    width: 6px;
    color: #4fa3e6;
}
.vars li em {
    width: 6px;
    color: #4fa3e6;
    font-family: "Liberation Serif", serif;
    font-size: 8px;
}
.minus {
    width: 5px;
    height: 5px;
    border: 1px solid #fff;
    background-color: #6d7782;
}
.vbar {
    display: flex;
    flex-direction: column;
    align-items: center;
    width: 9px;
    padding: 3px 0;
    background-color: #3a4048;
}
.vbar b {
    width: 9px;
    height: 42px;
    margin: 4px 0 auto;
    background-color: #5c6571;
}
.vbar .caret, .calc-bar .caret {
    border-top-color: #78818b;
}
.detail-label {
    display: block;
    margin-left: 1px;
    line-height: 12px;
}
.detail {
    width: 143px;
    height: 50px;
    margin: 0 0 19px 1px;
    border: 1px solid #58626e;
}
.calc table {
    width: 143px;
    margin: 0 0 19px 1px;
    border-collapse: collapse;
}
.calc tr {
    height: 13px;
    border-bottom: 1px solid #4c5764;
}
.calc th {
    width: 65px;
    padding-left: 14px;
}
.calc h5 {
    margin-left: 4px;
    font-size: 7px;
    font-weight: normal;
    line-height: 9px;
}
.ops {
    display: grid;
    grid-template-columns: repeat(4, 1fr);
    gap: 4px;
    width: 136px;
    margin: 0 0 4px 4px;
}
.calc-bar {
    display: flex;
    flex-direction: column;
    align-items: center;
    width: 6px;
    margin: 18px 3px 0 0;
    padding: 4px 0;
    background-color: #353c46;
}
.calc-bar b {
    width: 5px;
    height: 184px;
    margin: 3px 0 auto;
    background-color: #5c6571;
}

/* status bar */
.status {
    display: flex;
    align-items: center;
    height: 17px;
    background-color: #303743;
}
.toggles {
    flex: 1;
    display: flex;
    justify-content: center;
    gap: 1px;
    padding-right: 134px;
    color: #a7aeb7;
}
.toggles button {
    padding: 0 2px;
    line-height: 13px;
}
.toggles .on {
    background-color: #55789c;
    color: #fff;
}
.status-right {
    display: flex;
    align-items: center;
    gap: 3px;
    width: 165px;
    padding-right: 3px;
}
.dim {
    color: #7f8893;
}
.status-icons {
    flex: 1;
    display: flex;
    justify-content: space-between;
    padding-left: 2px;
}
```
